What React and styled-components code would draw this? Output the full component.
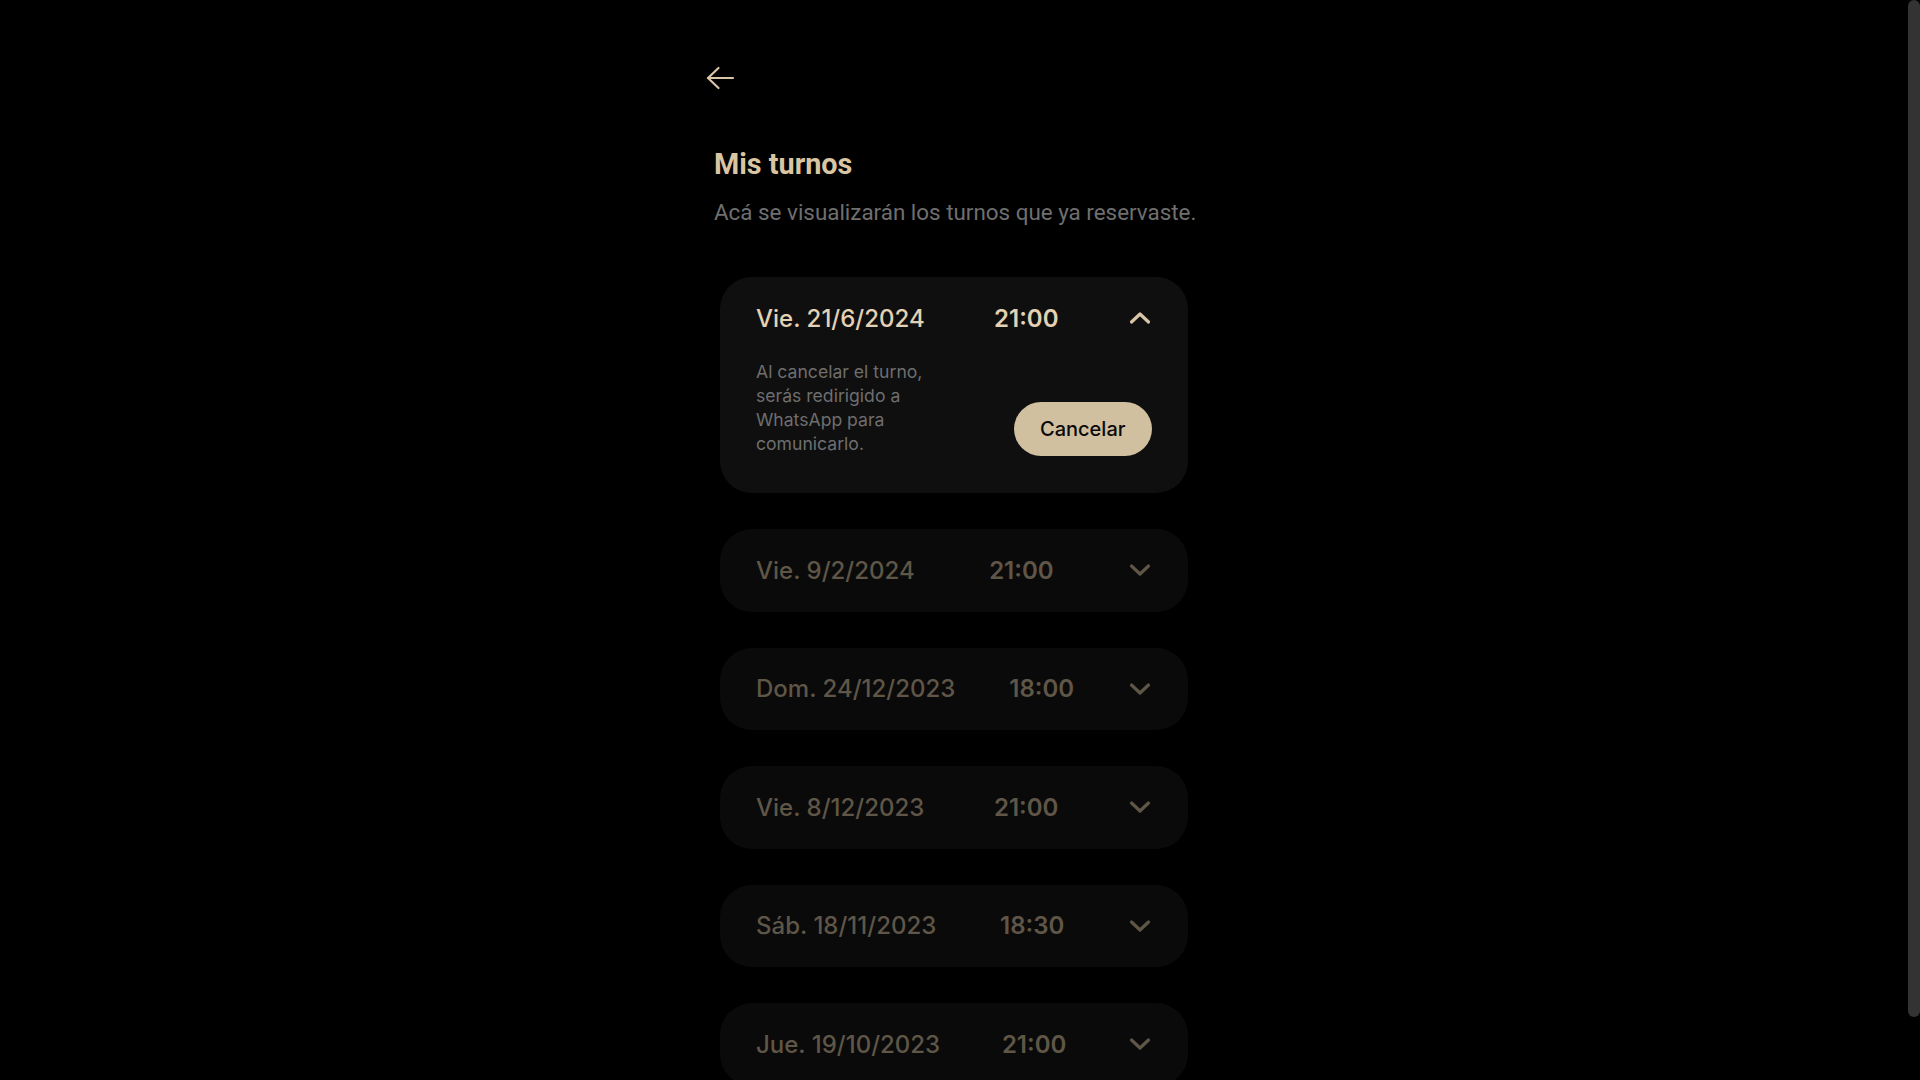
import React from "react";
import styled, { createGlobalStyle } from "styled-components";

const GlobalStyle = createGlobalStyle`
  html, body {
    margin: 0;
    padding: 0;
    background: #000000;
  }
  body {
    font-family: "Inter", "Noto Sans", sans-serif;
    color: #e2d1b3;
  }
  ::-webkit-scrollbar {
    width: 12px;
  }
  ::-webkit-scrollbar-track {
    background: #000000;
  }
  ::-webkit-scrollbar-thumb {
    background: #333333;
    border-radius: 6px;
  }
`;

const Page = styled.main`
  display: flex;
  justify-content: center;
  padding: 66px 12px 60px 0;
`;

const ScrollThumb = styled.div`
  position: fixed;
  top: 0;
  right: 0;
  width: 12px;
  height: 1017px;
  border-radius: 6px;
  background: #333333;
`;

const Container = styled.div`
  width: 482px;
  display: flex;
  flex-direction: column;
`;

const BackButton = styled.button`
  align-self: flex-start;
  display: flex;
  background: none;
  border: none;
  padding: 0;
  margin: 0 0 0 -7px;
  color: #d8c5a5;
  cursor: pointer;
`;

const Title = styled.h1`
  margin: 57px 0 0 1px;
  font-family: "Roboto", "Liberation Sans", sans-serif;
  font-weight: 700;
  font-size: 28.8px;
  line-height: 34.5px;
  color: #d9c5a2;
`;

const Subtitle = styled.p`
  margin: 15px 0 0 1px;
  font-family: "Roboto", "Liberation Sans", sans-serif;
  font-weight: 400;
  font-size: 22.4px;
  line-height: 30px;
  white-space: nowrap;
  color: #6f6f6f;
`;

const List = styled.div`
  display: flex;
  flex-direction: column;
  gap: 36px;
  margin: 50.5px 7px 0;
`;

const Card = styled.section`
  background: ${(p) => (p.$open ? "#0f0f0f" : "#0a0a0a")};
  border-radius: 32px;
  padding: 0 36px ${(p) => (p.$open ? "37.5px" : "0")};
`;

const Header = styled.div`
  height: 82.5px;
  display: flex;
  align-items: center;
  justify-content: space-between;
  color: ${(p) => (p.$open ? "#e3d2b4" : "#5f5647")};
`;

const DateText = styled.span`
  font-size: 24px;
  font-weight: 500;
`;

const TimeText = styled.span`
  font-size: 24px;
  font-weight: 600;
`;

const Toggle = styled.span`
  display: flex;
  width: 24px;
  justify-content: center;
  color: ${(p) => (p.$open ? "#d9c6a6" : "#5f5647")};
`;

const Body = styled.div`
  display: flex;
  justify-content: space-between;
  align-items: flex-end;
`;

const Note = styled.p`
  margin: 0;
  width: 185px;
  font-size: 17.6px;
  line-height: 24px;
  color: #6e6e6e;
`;

const CancelButton = styled.button`
  height: 54px;
  padding: 0 26.5px;
  border: none;
  border-radius: 27px;
  background: #d1c0a0;
  color: #0a0a0a;
  font-family: "Inter", "Noto Sans", sans-serif;
  font-size: 20px;
  font-weight: 500;
  cursor: pointer;
`;

const ArrowLeft = () => (
  <svg width="29" height="24" viewBox="0 0 29 24" fill="none" stroke="currentColor" strokeWidth="2.2" strokeLinecap="round" strokeLinejoin="round">
    <path d="M27 12H2" />
    <path d="M12.5 2L2 12l10.5 10" />
  </svg>
);

const Chevron = ({ up }) => (
  <svg width="24" height="14" viewBox="0 0 24 14" fill="none" stroke="currentColor" strokeWidth="3.2" strokeLinecap="round" strokeLinejoin="round">
    {up ? <path d="M3.5 11L12 3l8.5 8" /> : <path d="M3.5 3L12 11l8.5-8" />}
  </svg>
);

const turnos = [
  { date: "Vie. 21/6/2024", time: "21:00", open: true },
  { date: "Vie. 9/2/2024", time: "21:00" },
  { date: "Dom. 24/12/2023", time: "18:00" },
  { date: "Vie. 8/12/2023", time: "21:00" },
  { date: "Sáb. 18/11/2023", time: "18:30" },
  { date: "Jue. 19/10/2023", time: "21:00" },
];

export default function App() {
  return (
    <>
      <GlobalStyle />
      <Page>
        <Container>
          <BackButton aria-label="Volver">
            <ArrowLeft />
          </BackButton>
          <Title>Mis turnos</Title>
          <Subtitle>Acá se visualizarán los turnos que ya reservaste.</Subtitle>
          <List>
            {turnos.map((t) => (
              <Card key={t.date} $open={t.open}>
                <Header $open={t.open}>
                  <DateText>{t.date}</DateText>
                  <TimeText>{t.time}</TimeText>
                  <Toggle $open={t.open}>
                    <Chevron up={t.open} />
                  </Toggle>
                </Header>
                {t.open && (
                  <Body>
                    <Note>
                      Al cancelar el turno, serás redirigido a WhatsApp para comunicarlo.
                    </Note>
                    <CancelButton>Cancelar</CancelButton>
                  </Body>
                )}
              </Card>
            ))}
          </List>
        </Container>
      </Page>
      <ScrollThumb aria-hidden="true" />
    </>
  );
}
